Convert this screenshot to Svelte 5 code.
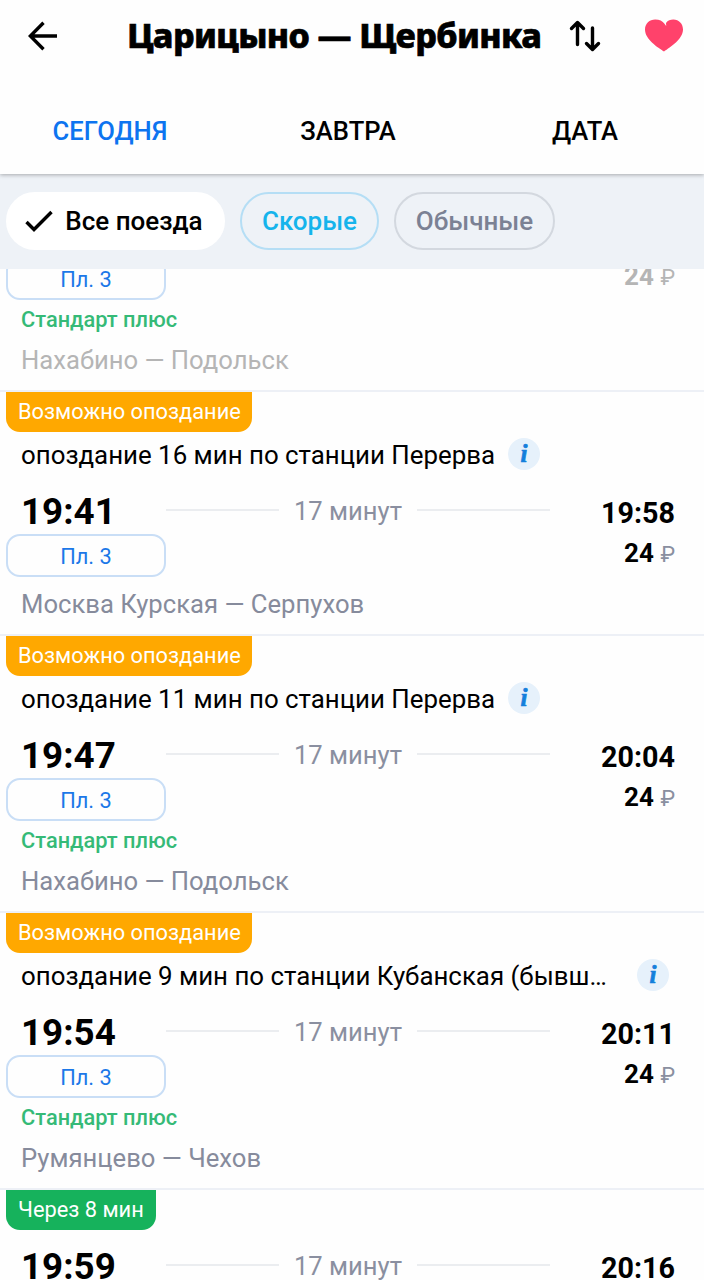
<script lang="ts">
  interface Train {
    badge?: string;
    soon?: boolean;
    delay?: string;
    departure?: string;
    arrival?: string;
    duration?: string;
    platform?: string;
    price?: string;
    express?: boolean;
    route?: string;
    gone?: boolean;
  }

  const tabs = ["СЕГОДНЯ", "ЗАВТРА", "ДАТА"];
  let activeTab = $state(0);

  const filters = [
    { id: "all", label: "Все поезда" },
    { id: "fast", label: "Скорые" },
    { id: "regular", label: "Обычные" },
  ];
  let activeFilter = $state("all");

  const trains: Train[] = [
    {
      platform: "Пл. 3",
      price: "24",
      express: true,
      route: "Нахабино — Подольск",
      gone: true,
    },
    {
      badge: "Возможно опоздание",
      delay: "опоздание 16 мин по станции Перерва",
      departure: "19:41",
      arrival: "19:58",
      duration: "17 минут",
      platform: "Пл. 3",
      price: "24",
      route: "Москва Курская — Серпухов",
    },
    {
      badge: "Возможно опоздание",
      delay: "опоздание 11 мин по станции Перерва",
      departure: "19:47",
      arrival: "20:04",
      duration: "17 минут",
      platform: "Пл. 3",
      price: "24",
      express: true,
      route: "Нахабино — Подольск",
    },
    {
      badge: "Возможно опоздание",
      delay: "опоздание 9 мин по станции Кубанская (бывш…",
      departure: "19:54",
      arrival: "20:11",
      duration: "17 минут",
      platform: "Пл. 3",
      price: "24",
      express: true,
      route: "Румянцево — Чехов",
    },
    {
      badge: "Через 8 мин",
      soon: true,
      departure: "19:59",
      arrival: "20:16",
      duration: "17 минут",
    },
  ];
</script>

<main>
  <header>
    <div class="bar">
      <button class="icon back" aria-label="Назад">
        <svg width="30" height="30" viewBox="0 0 30 30">
          <path d="M29 15H3M15.500 1.800L2.300 15l13.200 13.200" />
        </svg>
      </button>
      <h1>Царицыно — Щербинка</h1>
      <button class="icon swap" aria-label="Поменять местами">
        <svg width="32" height="32" viewBox="0 0 32 32">
          <path d="M8.500 24.500V3M2.500 8.500l6-6 6 6M23.500 8v21M17.500 23.500l6 6 6-6" />
        </svg>
      </button>
      <button class="icon fav" aria-label="Избранное">
        <svg width="38" height="33" viewBox="0 0 38 33">
          <path
            d="M19 32.500C13 28.500 0 20.500 0 10.500 0 4.500 4.500 0.500 10.200 0.500c4.300 0 7.300 1.600 9.300 4.200l1.700 2.200-.2-3C22.800 1.500 25.500 0.500 28.300 0.500 34 0.500 38 4.900 38 10.500 38 20 25.500 28 19 32.500z"
          />
        </svg>
      </button>
    </div>
    <nav>
      {#each tabs as tab, i}
        <button class="tab" class:active={activeTab === i} onclick={() => (activeTab = i)}>{tab}</button>
      {/each}
    </nav>
  </header>

  <div class="filters">
    {#each filters as f}
      <button
        class="chip {f.id}"
        class:selected={activeFilter === f.id}
        onclick={() => (activeFilter = f.id)}
      >
        {#if activeFilter === f.id}
          <svg width="28" height="22" viewBox="0 0 28 22"><path d="M1.500 12l7.500 7.500L26.500 2" /></svg>
        {/if}
        <span>{f.label}</span>
      </button>
    {/each}
  </div>

  <div class="list">
    {#each trains as t}
      <article class:gone={t.gone}>
        {#if t.badge}
          <div class="badge" class:soon={t.soon}><span>{t.badge}</span></div>
        {/if}
        {#if t.delay}
          <div class="delay">
            <p class:truncated={t.delay.endsWith("…")}>{t.delay}</p>
            <button class="info" aria-label="Подробнее">i</button>
          </div>
        {/if}
        {#if t.departure}
          <div class="times" class:compact={!t.delay}>
            <strong class="dep">{t.departure}</strong>
            <span class="line left"></span>
            <span class="duration">{t.duration}</span>
            <span class="line right"></span>
            <strong class="arr">{t.arrival}</strong>
          </div>
        {/if}
        {#if t.platform}
          <div class="row">
            <span class="platform">{t.platform}</span>
            <span class="price"><b>{t.price}</b> <span class="rub">₽</span></span>
          </div>
        {/if}
        {#if t.express}
          <p class="express"><span>Стандарт плюс</span></p>
        {/if}
        {#if t.route}
          <p class="route"><span>{t.route}</span></p>
        {/if}
      </article>
    {/each}
  </div>
</main>

<style>
  :global(body) {
    margin: 0;
    background: #fefefe;
  }

  main {
    height: 1280px;
    display: flex;
    flex-direction: column;
    overflow: hidden;
    font-family: Roboto, "Noto Sans", sans-serif;
    color: #000;
    background: #fefefe;
  }

  button {
    border: 0;
    padding: 0;
    background: none;
    font: inherit;
    color: inherit;
    cursor: pointer;
  }

  p,
  h1 {
    margin: 0;
    white-space: nowrap;
  }

  svg {
    display: block;
    fill: none;
    stroke: #000;
    stroke-width: 3.4;
  }

  header {
    position: relative;
    flex: none;
    height: 174px;
    background: #fefefe;
    box-shadow: 0 1px 4px rgba(0, 0, 0, 0.3);
  }

  .bar {
    display: flex;
    align-items: center;
    height: 72px;
    padding: 0 21px 0 28px;
  }

  h1 {
    width: 442px;
    margin-left: 69px;
    padding-bottom: 2px;
    font-family: "Noto Sans", "Open Sans", sans-serif;
    font-size: 34px;
    font-weight: 800;
    line-height: 46px;
    letter-spacing: -0.6px;
    -webkit-text-stroke: 0.7px #000;
  }

  .swap svg {
    stroke-linecap: round;
    stroke-linejoin: round;
  }

  .fav {
    margin-left: 44px;
    margin-bottom: 2px;
  }

  .fav svg {
    fill: #ff426b;
    stroke: none;
  }

  nav {
    display: flex;
    height: 102px;
  }

  .tab {
    width: 237px;
    padding-top: 16px;
    font-size: 25.6px;
    font-weight: 500;
  }

  .tab:first-child {
    width: 220px;
  }

  .tab:nth-child(2) {
    width: 256px;
  }

  .tab:last-child {
    width: 218px;
  }

  .tab.active {
    color: #0d74f0;
  }

  .filters {
    flex: none;
    display: flex;
    gap: 15px;
    box-sizing: border-box;
    height: 95px;
    padding: 18px 6px;
    background: #eef2f7;
  }

  .chip {
    display: flex;
    align-items: center;
    justify-content: center;
    gap: 12px;
    box-sizing: border-box;
    height: 58px;
    border: 2px solid #d3d8df;
    border-radius: 29px;
    font-size: 26px;
    font-weight: 500;
    color: #7b8194;
  }

  .chip.all {
    width: 219px;
    padding-right: 3px;
  }

  .chip.fast {
    width: 139px;
    border-color: #b5def5;
    color: #15b4ec;
  }

  .chip.regular {
    width: 161px;
  }

  .chip.selected {
    border-color: #fff;
    background: #fff;
    color: #000;
  }

  .list {
    flex: 1;
    min-height: 0;
    overflow: hidden;
  }

  article {
    border-top: 2px solid #edf0f6;
  }

  article:first-child {
    margin-top: -14px;
  }

  .badge {
    display: flex;
    align-items: center;
    box-sizing: border-box;
    width: 246px;
    height: 40px;
    margin-left: 6px;
    padding: 0 0 2px 12px;
    border-radius: 0 0 14px 14px;
    background: #ffa800;
    color: #fff;
    font-size: 21.8px;
    white-space: nowrap;
  }

  .badge.soon {
    width: 150px;
    background: #16b25c;
  }

  .delay {
    display: flex;
    align-items: center;
    height: 46px;
    padding: 0 34px 0 21px;
    font-size: 25.85px;
  }

  .truncated {
    width: 603px;
  }

  .info {
    width: 32px;
    height: 32px;
    margin-left: 13px;
    margin-bottom: 3px;
    border-radius: 50%;
    background: #e6f1fb;
    color: #147fdb;
    font: italic bold 25px/32px "Liberation Serif", serif;
    -webkit-text-stroke: 0.7px #147fdb;
  }

  .times {
    display: flex;
    align-items: center;
    height: 56px;
    padding: 0 29px 0 21px;
  }

  .times.compact {
    height: 62px;
  }

  .times > * {
    position: relative;
    top: 4px;
  }

  .times .dep {
    top: 5px;
    width: 145px;
    font-size: 36.8px;
  }

  .line {
    width: 113px;
    height: 2px;
    background: #ebedf0;
  }

  .line.right {
    width: 133px;
  }

  .times .duration {
    top: 5px;
    width: 138px;
    text-align: center;
    font-size: 25.6px;
    color: #8a8fa0;
  }

  .times .arr {
    top: 7px;
    flex: 1;
    text-align: right;
    font-size: 28.7px;
  }

  .row {
    display: flex;
    justify-content: space-between;
    height: 43px;
    padding: 0 29px 0 6px;
  }

  .platform {
    box-sizing: border-box;
    width: 160px;
    border: 2px solid #c9def6;
    border-radius: 14px;
    text-align: center;
    font-size: 21.8px;
    line-height: 42px;
    color: #1c78e8;
  }

  .price {
    font-size: 26px;
    line-height: 38px;
  }

  .rub {
    font-size: 22px;
    color: #8a8fa0;
  }

  .express {
    height: 26px;
    padding: 7px 21px 0;
    font-size: 21.8px;
    font-weight: 500;
    line-height: 26px;
    color: #35ba77;
  }

  .route {
    height: 57px;
    padding-left: 21px;
    font-size: 25.65px;
    line-height: 54px;
    color: #868b9c;
  }

  .gone .price,
  .gone .rub,
  .gone .route {
    color: #b5b5b5;
  }
</style>
